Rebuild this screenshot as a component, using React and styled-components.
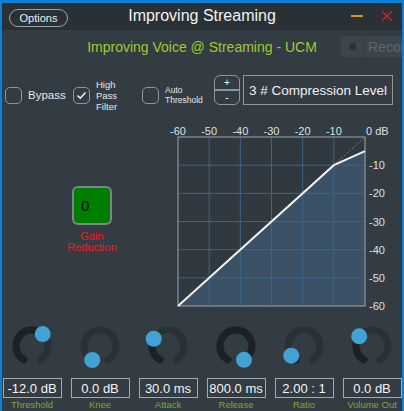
import styled, { createGlobalStyle } from "styled-components";

const GlobalStyle = createGlobalStyle`
  html, body {
    margin: 0;
    padding: 0;
    background: #343c43;
  }
  body {
    font-family: "Liberation Sans", Arial, sans-serif;
  }
`;

const Frame = styled.div`
  width: 404px;
  height: 411px;
  box-sizing: border-box;
  border-top: 3px solid #0c7fd6;
  border-left: 2px solid #0c7fd6;
  border-right: 2px solid #0c7fd6;
  background: #343c43;
  overflow: hidden;
  display: flex;
  flex-direction: column;
`;

const TitleBar = styled.div`
  height: 27px;
  flex-shrink: 0;
  background: #293036;
  display: grid;
  grid-template-columns: 1fr auto 1fr;
  align-items: center;
`;

const OptionsButton = styled.button`
  justify-self: start;
  margin-left: 7px;
  margin-top: 3px;
  width: 59px;
  height: 18px;
  border: 1px solid #9ba2a7;
  border-radius: 9px;
  background: transparent;
  color: #f0f0f0;
  font-family: inherit;
  font-size: 11px;
  padding: 0;
`;

const Title = styled.div`
  color: #f2f2f2;
  font-size: 16px;
  margin-top: -1px;
`;

const WindowControls = styled.div`
  justify-self: end;
  display: flex;
  align-items: center;
  gap: 18px;
  margin-right: 9px;
  margin-top: -1px;
`;

const SubRow = styled.div`
  height: 21px;
  margin-top: 6px;
  display: grid;
  grid-template-columns: 1fr auto 1fr;
  align-items: center;
`;

const Subtitle = styled.div`
  color: #9ccc2e;
  font-size: 14px;
  grid-column: 2;
`;

const RecordTab = styled.div`
  justify-self: end;
  margin-right: -22px;
  height: 21px;
  width: 83px;
  display: flex;
  background: #3b454d;
  color: #5b666f;
  font-size: 14px;
`;

const RecordDot = styled.div`
  width: 22px;
  display: flex;
  align-items: center;
  justify-content: center;
  border-right: 1px solid #343c43;
  &::after {
    content: "";
    width: 7px;
    height: 7px;
    border-radius: 50%;
    background: #2c3338;
  }
`;

const RecordText = styled.div`
  display: flex;
  align-items: center;
  padding-left: 4px;
`;

const ControlsRow = styled.div`
  height: 30px;
  margin-top: 18px;
  padding-left: 3px;
  display: flex;
  align-items: flex-start;
`;

const CheckGroup = styled.div`
  display: flex;
  align-items: center;
  height: 17px;
  margin-top: 12px;
`;

const Box = styled.div`
  width: 17px;
  height: 17px;
  box-sizing: border-box;
  border: 1px solid #8d969c;
  border-radius: 5px;
  display: flex;
  align-items: center;
  justify-content: center;
  flex-shrink: 0;
`;

const CheckLabel = styled.div`
  width: ${(p) => p.$w}px;
  margin-left: 6px;
  color: #e6e6e6;
  font-size: ${(p) => p.$size}px;
  line-height: ${(p) => p.$lh}px;
`;

const Stepper = styled.div`
  width: 26px;
  height: 30px;
  box-sizing: border-box;
  border: 1px solid #8d969c;
  border-radius: 6px;
  display: flex;
  flex-direction: column;
  color: #f0f0f0;
  font-size: 10px;
  flex-shrink: 0;
`;

const StepHalf = styled.div`
  flex: 1;
  display: flex;
  align-items: center;
  justify-content: center;
  border-top: ${(p) => (p.$lower ? "2px solid #8d969c" : "none")};
`;

const LevelBox = styled.div`
  margin-left: 3px;
  width: 150px;
  height: 30px;
  box-sizing: border-box;
  border: 1px solid #8d969c;
  display: flex;
  align-items: center;
  padding-left: 5px;
  color: #f0f0f0;
  font-size: 13.5px;
  white-space: nowrap;
`;

const Middle = styled.div`
  margin-top: 17px;
  height: 192px;
  display: flex;
`;

const GainColumn = styled.div`
  width: 163px;
  box-sizing: border-box;
  padding-left: 17px;
  padding-top: 64px;
  display: flex;
  flex-direction: column;
  align-items: center;
`;

const GainBox = styled.div`
  width: 40px;
  height: 39px;
  box-sizing: border-box;
  border: 2px solid #7d868c;
  border-radius: 6px;
  background: #007e00;
  display: flex;
  align-items: center;
  padding-left: 7px;
  color: #0b0b0b;
  font-size: 15px;
`;

const GainLabel = styled.div`
  margin-top: 6px;
  color: #f01a1a;
  font-size: 11px;
  line-height: 11px;
  text-align: center;
`;

const KnobRow = styled.div`
  margin-top: 7px;
  margin-left: -4px;
  display: grid;
  grid-template-columns: repeat(6, 68px);
`;

const KnobCell = styled.div`
  display: flex;
  flex-direction: column;
  align-items: center;
`;

const ValueBox = styled.div`
  margin-top: 7px;
  width: 59px;
  height: 20px;
  box-sizing: border-box;
  border: 1px solid #a2aaaf;
  display: flex;
  align-items: center;
  justify-content: center;
  color: #f4f4f4;
  font-size: 13px;
  white-space: nowrap;
`;

const KnobLabel = styled.div`
  margin-top: 1px;
  color: #80a63a;
  font-size: 9.5px;
  line-height: 11px;
  white-space: nowrap;
`;

const GX = 13;
const GY = 15;
const GW = 187;
const GH = 169;
const dbX = (db) => GX + ((db + 60) / 60) * GW;
const dbY = (db) => GY + (-db / 60) * GH;

function Chart() {
  const steps = [1, 2, 3, 4, 5];
  const knee = [dbX(-10), dbY(-10)];
  const end = [dbX(0), dbY(-5)];
  const start = [dbX(-60), dbY(-60)];
  return (
    <svg width="235" height="192" viewBox="0 0 235 192">
      <rect x={GX} y={GY} width={GW} height={GH} fill="#303840" />
      <polygon
        points={`${start[0]},${start[1]} ${knee[0]},${knee[1]} ${end[0]},${end[1]} ${GX + GW},${GY + GH}`}
        fill="#3a5064"
      />
      {steps.map((i) => (
        <g key={i} stroke="#3b6588" strokeWidth="1">
          <line x1={GX + (GW * i) / 6} y1={GY} x2={GX + (GW * i) / 6} y2={GY + GH} />
          <line x1={GX} y1={GY + (GH * i) / 6} x2={GX + GW} y2={GY + (GH * i) / 6} />
        </g>
      ))}
      <rect x={GX} y={GY} width={GW} height={GH} fill="none" stroke="#9ea6ab" strokeWidth="1" />
      <line x1={knee[0]} y1={knee[1]} x2={GX + GW} y2={GY} stroke="#8a9196" strokeWidth="1" strokeDasharray="1.5 2" />
      <polyline
        points={`${start[0]},${start[1]} ${knee[0]},${knee[1]} ${end[0]},${end[1]}`}
        fill="none"
        stroke="#f2f2f2"
        strokeWidth="2"
      />
      <g fill="#dde0e2" fontSize="11" fontFamily="Liberation Sans, Arial, sans-serif">
        {[-60, -50, -40, -30, -20, -10].map((db) => (
          <text key={db} x={dbX(db)} y="13" textAnchor="middle">
            {db}
          </text>
        ))}
        <text x="201" y="13">0 dB</text>
        {[-10, -20, -30, -40, -50, -60].map((db) => (
          <text key={db} x="204" y={dbY(db) + 4}>
            {db}
          </text>
        ))}
      </g>
    </svg>
  );
}

const polar = (a, r) => {
  const t = (a * Math.PI) / 180;
  return [25 + r * Math.sin(t), 25 - r * Math.cos(t)];
};

const arcPath = (a0, a1, r) => {
  const [x0, y0] = polar(a0, r);
  const [x1, y1] = polar(a1, r);
  const large = a1 - a0 > 180 ? 1 : 0;
  return `M ${x0} ${y0} A ${r} ${r} 0 ${large} 1 ${x1} ${y1}`;
};

function Knob({ angle }) {
  const [dx, dy] = polar(angle, 16);
  return (
    <svg width="50" height="50" viewBox="0 0 50 50">
      <path d={arcPath(-150, 150, 16)} fill="none" stroke="#293137" strokeWidth="7" strokeLinecap="round" />
      {angle > -149 && (
        <path d={arcPath(-150, angle, 16)} fill="none" stroke="#1b2125" strokeWidth="7" strokeLinecap="round" />
      )}
      <circle cx={dx} cy={dy} r="8" fill="#42a2d4" />
    </svg>
  );
}

const knobs = [
  { label: "Threshold", value: "-12.0 dB", angle: 42 },
  { label: "Knee", value: "0.0 dB", angle: -151 },
  { label: "Attack", value: "30.0 ms", angle: -63 },
  { label: "Release", value: "800.0 ms", angle: 150 },
  { label: "Ratio", value: "2.00 : 1", angle: -127 },
  { label: "Volume Out", value: "0.0 dB", angle: -53 },
];

function Check({ checked }) {
  return (
    <Box>
      {checked && (
        <svg width="11" height="9" viewBox="0 0 11 9">
          <path d="M1.5 4.5 L4.2 7.2 L9.5 1.5" fill="none" stroke="#f4f4f4" strokeWidth="1.6" />
        </svg>
      )}
    </Box>
  );
}

export default function App() {
  return (
    <>
      <GlobalStyle />
      <Frame>
        <TitleBar>
          <OptionsButton>Options</OptionsButton>
          <Title>Improving Streaming</Title>
          <WindowControls>
            <svg width="12" height="4" viewBox="0 0 12 4">
              <rect x="0" y="1" width="12" height="2" fill="#d69a18" />
            </svg>
            <svg width="12" height="10" viewBox="0 0 12 10">
              <path d="M1 0.5 L11 9.5 M11 0.5 L1 9.5" stroke="#c3252b" strokeWidth="1.5" />
            </svg>
          </WindowControls>
        </TitleBar>

        <SubRow>
          <Subtitle>Improving Voice @ Streaming - UCM</Subtitle>
          <RecordTab>
            <RecordDot />
            <RecordText>Record</RecordText>
          </RecordTab>
        </SubRow>

        <ControlsRow>
          <CheckGroup>
            <Check />
            <CheckLabel $w={45} $size={11.5} $lh={13}>Bypass</CheckLabel>
          </CheckGroup>
          <CheckGroup>
            <Check checked />
            <CheckLabel $w={46} $size={9.5} $lh={11}>
              High
              <br />
              Pass
              <br />
              Filter
            </CheckLabel>
          </CheckGroup>
          <CheckGroup>
            <Check />
            <CheckLabel $w={49} $size={8.5} $lh={9.5}>
              Auto
              <br />
              Threshold
            </CheckLabel>
          </CheckGroup>
          <Stepper>
            <StepHalf>+</StepHalf>
            <StepHalf $lower>-</StepHalf>
          </Stepper>
          <LevelBox>3 # Compression Level</LevelBox>
        </ControlsRow>

        <Middle>
          <GainColumn>
            <GainBox>0</GainBox>
            <GainLabel>
              Gain
              <br />
              Reduction
            </GainLabel>
          </GainColumn>
          <Chart />
        </Middle>

        <KnobRow>
          {knobs.map((k) => (
            <KnobCell key={k.label}>
              <Knob angle={k.angle} />
              <ValueBox>{k.value}</ValueBox>
              <KnobLabel>{k.label}</KnobLabel>
            </KnobCell>
          ))}
        </KnobRow>
      </Frame>
    </>
  );
}
